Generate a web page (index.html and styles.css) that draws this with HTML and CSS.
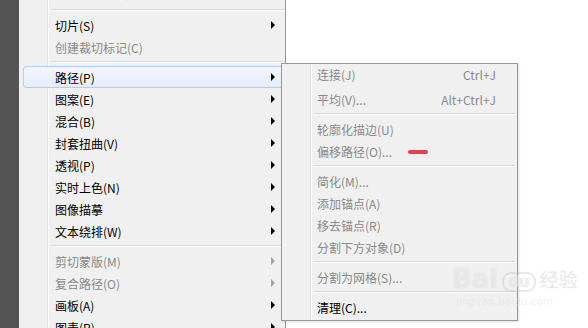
FILE: index.html
```html
<!DOCTYPE html>
<html lang="zh-CN">
  <head>
    <meta charset="UTF-8" />
    <title>对象菜单</title>
    <link rel="stylesheet" href="styles.css">
  </head>
  <body>
    <div class="page">
      <div class="strip"></div>

      <ul class="menu">
        <li class="item">拼合透明度(F)...</li>
        <li class="sep"></li>
        <li class="item">切片(S)<span class="arrow"></span></li>
        <li class="item off">创建裁切标记(C)</li>
        <li class="sep"></li>
        <li class="item hover">路径(P)<span class="arrow"></span></li>
        <li class="item">图案(E)<span class="arrow"></span></li>
        <li class="item">混合(B)<span class="arrow"></span></li>
        <li class="item">封套扭曲(V)<span class="arrow"></span></li>
        <li class="item">透视(P)<span class="arrow"></span></li>
        <li class="item">实时上色(N)<span class="arrow"></span></li>
        <li class="item">图像描摹<span class="arrow"></span></li>
        <li class="item">文本绕排(W)<span class="arrow"></span></li>
        <li class="sep"></li>
        <li class="item off">剪切蒙版(M)<span class="arrow"></span></li>
        <li class="item off">复合路径(O)<span class="arrow"></span></li>
        <li class="item">画板(A)<span class="arrow"></span></li>
        <li class="item">图表(R)<span class="arrow"></span></li>
      </ul>

      <ul class="menu sub">
        <li class="item off">连接(J)<span class="key">Ctrl+J</span></li>
        <li class="item off">平均(V)...<span class="key">Alt+Ctrl+J</span></li>
        <li class="sep"></li>
        <li class="item off">轮廓化描边(U)</li>
        <li class="item off">偏移路径(O)...<span class="mark"></span></li>
        <li class="sep"></li>
        <li class="item off">简化(M)...</li>
        <li class="item off">添加锚点(A)</li>
        <li class="item off">移去锚点(R)</li>
        <li class="item off">分割下方对象(D)</li>
        <li class="sep"></li>
        <li class="item off">分割为网格(S)...</li>
        <li class="sep"></li>
        <li class="item">清理(C)...</li>
      </ul>

      <div class="watermark">
        <div class="logo">Bai<span class="paw">du</span><span class="jy">经验</span></div>
        <div class="url">jingyan.baidu.com</div>
      </div>
    </div>
  </body>
</html>
```

FILE: styles.css
```css
body {
  margin: 0;
  background: #fff;
  font-family: "Noto Sans CJK SC", sans-serif;
  font-size: 12px;
  overflow: hidden;
}

.page {
  position: relative;
  display: flex;
  height: 328px;
  overflow: hidden;
}

.strip {
  width: 19px;
  background: #545454;
  flex: none;
}

.menu {
  list-style: none;
  margin: -16px 0 0;
  padding: 0 0 0 4px;
  width: 262px;
  background: #f0f0f0;
  border-right: 1px solid #979797;
  background-image: linear-gradient(to right, transparent 28px, #e2e3e3 28px, #e2e3e3 29px, #fff 29px, #fff 30px, transparent 30px);
  flex: none;
}

.menu > .item:first-child {
  line-height: 16px;
}

.item {
  position: relative;
  height: 22px;
  line-height: 22px;
  padding-left: 31px;
  color: #000;
  border: 1px solid transparent;
  border-radius: 3px;
  box-sizing: border-box;
  margin-right: 2px;
}

.item.off {
  color: #8a8a8a;
}

.item.hover {
  border-color: #aecff7;
  background: linear-gradient(#f2f7fd, #e4edfa);
}

.sep {
  height: 8px;
  margin-left: 29px;
  background: linear-gradient(transparent 3px, #d7d7d7 3px, #d7d7d7 4px, #fff 4px, #fff 5px, transparent 5px);
}

.arrow {
  position: absolute;
  right: 7px;
  top: 6px;
  width: 0;
  height: 0;
  border-left: 4px solid #000;
  border-top: 4px solid transparent;
  border-bottom: 4px solid transparent;
}

.off .arrow {
  border-left-color: #a3a3a3;
}

.sub {
  position: absolute;
  left: 281px;
  top: 63px;
  margin: 0;
  width: 230px;
  padding: 2px 2px 2px 3px;
  border: 1px solid #979797;
  box-shadow: 1px 1px 2px rgba(0, 0, 0, 0.12);
}

.sub .item {
  padding-left: 31px;
}

.key {
  position: absolute;
  right: 16px;
  top: 0;
}

.mark {
  position: absolute;
  left: 122px;
  top: 9px;
  width: 20px;
  height: 4px;
  border-radius: 2px;
  background: #e1434d;
}

.watermark {
  position: absolute;
  left: 452px;
  top: 262px;
  color: rgba(255, 255, 255, 0.5);
  text-shadow: 0 0 1px rgba(160, 160, 160, 0.4);
  pointer-events: none;
}

.logo {
  font-family: "DejaVu Sans", sans-serif;
  font-size: 26px;
  font-weight: bold;
  line-height: 34px;
  display: flex;
  align-items: center;
}

.paw {
  font-size: 15px;
  margin: 6px 4px 0;
  padding: 0 4px;
  border: 2px solid rgba(190, 190, 190, 0.35);
  border-radius: 9px;
  line-height: 16px;
}

.jy {
  font-family: "Noto Sans CJK SC", sans-serif;
  font-size: 19px;
  font-weight: normal;
  color: rgba(255, 255, 255, 0.4);
}

.url {
  font-family: "DejaVu Sans", sans-serif;
  font-size: 10px;
  margin-left: 4px;
  letter-spacing: 0.3px;
  color: rgba(225, 225, 225, 0.5);
  text-shadow: none;
}
```
